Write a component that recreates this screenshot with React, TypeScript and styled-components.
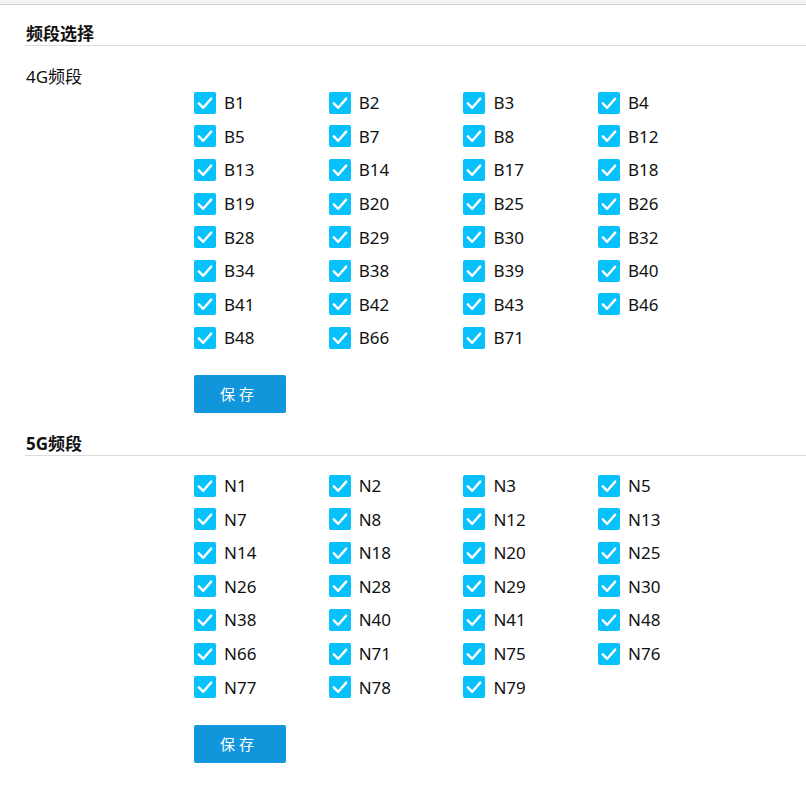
import React from "react";
import styled, { createGlobalStyle } from "styled-components";

const Global = createGlobalStyle`
  html, body { margin: 0; padding: 0; background: #fff; }
  body {
    font-family: "Noto Sans", "Noto Sans CJK SC", sans-serif;
    color: #111;
  }
  * { box-sizing: border-box; }
`;

const TopStrip = styled.div`
  height: 5px;
  background: #f3f3f3;
  border-bottom: 1px solid #d4d4d4;
`;

const Page = styled.div`
  padding-left: 25px;
`;

const SectionTitle = styled.div<{ $top: number }>`
  margin-top: ${(p) => p.$top}px;
  font-size: 17px;
  font-weight: 700;
  line-height: 22px;
  padding-left: 1px;
  border-bottom: 1px solid #dcdcdc;
`;

const GroupLabel = styled.div`
  margin-top: 22px;
  font-size: 17px;
  line-height: 18px;
  padding-left: 1px;
`;

const Body = styled.div<{ $top: number }>`
  margin-top: ${(p) => p.$top}px;
  margin-left: 169px;
`;

const Grid = styled.div`
  display: grid;
  grid-template-columns: repeat(4, 134.7px);
  grid-auto-rows: 33.6px;
`;

const Item = styled.label`
  display: flex;
  align-items: center;
  gap: 8px;
  font-size: 17px;
  cursor: pointer;
`;

const Box = styled.span`
  width: 22px;
  height: 22px;
  border-radius: 2px;
  background: #06c1fb;
  display: flex;
  align-items: center;
  justify-content: center;
  flex: none;
`;

const SaveButton = styled.button<{ $top: number }>`
  margin-top: ${(p) => p.$top}px;
  width: 92px;
  height: 38px;
  border: none;
  border-radius: 2px;
  background: #1296db;
  color: #fff;
  font-family: "Noto Sans CJK SC", sans-serif;
  font-size: 15px;
  letter-spacing: 4px;
  padding-left: 4px;
  display: flex;
  align-items: center;
  justify-content: center;
  cursor: pointer;
`;

const Check = () => (
  <svg width="22" height="22" viewBox="0 0 22 22">
    <polyline
      points="4.8,11.3 9.2,15.8 17.2,6.6"
      fill="none"
      stroke="#fff"
      strokeWidth="2.4"
      strokeLinecap="round"
      strokeLinejoin="round"
    />
  </svg>
);

const Band = ({ name }: { name: string }) => (
  <Item>
    <Box>
      <Check />
    </Box>
    {name}
  </Item>
);

const lte = [
  "B1", "B2", "B3", "B4", "B5", "B7", "B8", "B12", "B13", "B14", "B17", "B18",
  "B19", "B20", "B25", "B26", "B28", "B29", "B30", "B32", "B34", "B38", "B39",
  "B40", "B41", "B42", "B43", "B46", "B48", "B66", "B71",
];
const nr = [
  "N1", "N2", "N3", "N5", "N7", "N8", "N12", "N13", "N14", "N18", "N20", "N25",
  "N26", "N28", "N29", "N30", "N38", "N40", "N41", "N48", "N66", "N71", "N75",
  "N76", "N77", "N78", "N79",
];

export default function App() {
  return (
    <>
      <Global />
      <TopStrip />
      <Page>
        <SectionTitle $top={18}>频段选择</SectionTitle>
        <GroupLabel>4G频段</GroupLabel>
        <Body $top={0}>
          <Grid>
            {lte.map((b) => (
              <Band key={b} name={b} />
            ))}
          </Grid>
          <SaveButton $top={20}>保存</SaveButton>
        </Body>
        <SectionTitle $top={20}>5G频段</SectionTitle>
        <Body $top={13}>
          <Grid>
            {nr.map((b) => (
              <Band key={b} name={b} />
            ))}
          </Grid>
          <SaveButton $top={21}>保存</SaveButton>
        </Body>
      </Page>
    </>
  );
}
